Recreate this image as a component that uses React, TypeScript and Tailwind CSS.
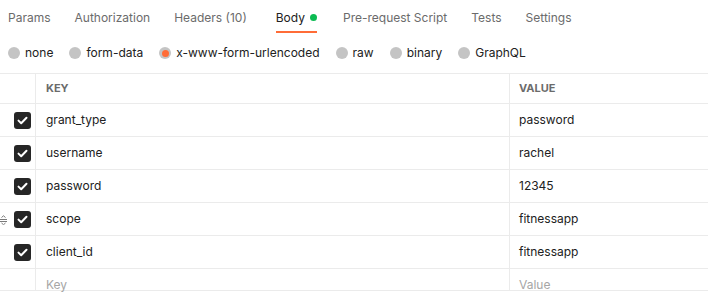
const tabs = [
  { label: "Params" },
  { label: "Authorization" },
  { label: "Headers", count: "(10)" },
  { label: "Body", active: true, extra: "ml-[5px]" },
  { label: "Pre-request Script", extra: "ml-[2px]" },
  { label: "Tests" },
  { label: "Settings" },
];

const bodyTypes = ["none", "form-data", "x-www-form-urlencoded", "raw", "binary", "GraphQL"];

const rows = [
  { key: "grant_type", value: "password" },
  { key: "username", value: "rachel" },
  { key: "password", value: "12345" },
  { key: "scope", value: "fitnessapp", hover: true },
  { key: "client_id", value: "fitnessapp" },
];

function Check() {
  return (
    <div className="w-[17px] h-[17px] rounded-[3px] bg-[#262626] flex items-center justify-center">
      <svg width="11" height="9" viewBox="0 0 11 9" fill="none">
        <path d="M1.5 4.6 4.2 7.2 9.5 1.8" stroke="white" strokeWidth="2" strokeLinecap="round" strokeLinejoin="round" />
      </svg>
    </div>
  );
}

function DragHandle() {
  return (
    <svg width="7" height="10" viewBox="0 0 7 10" fill="none" className="absolute left-0 top-[12px]">
      <path d="M1.5 2.5 3.5 0.8 5.5 2.5M0 4.5h7M0 6.5h7M1.5 8 3.5 9.7 5.5 8" stroke="#7a7a7a" strokeWidth="1" />
    </svg>
  );
}

export default function App() {
  return (
    <div className="w-[708px] h-[294px] overflow-hidden bg-white font-['Inter',sans-serif] text-[12px] text-[#212121]">
      <div className="flex items-center h-[35px] pl-[8px] gap-[24px]">
        {tabs.map((t) => (
          <div
            key={t.label}
            className={`relative h-full flex items-center gap-[5px] ${t.extra ?? ""} ${t.active ? "text-[#212121]" : "text-[#6b6b6b]"}`}
          >
            <span>
              {t.label}
              {t.count && <span className="text-[#6b6b6b]"> {t.count}</span>}
            </span>
            {t.active && <span className="w-[7px] h-[7px] rounded-full bg-[#0cbb52]" />}
            {t.active && <div className="absolute left-0 right-0 bottom-[2px] h-[2px] bg-[#ff6c37]" />}
          </div>
        ))}
      </div>

      <div className="flex items-center h-[36px] pl-[8px] gap-[16px]">
        {bodyTypes.map((b) => {
          const on = b === "x-www-form-urlencoded";
          return (
            <div key={b} className="flex items-center gap-[5px] text-[#212121]">
              <span className="w-[12px] h-[12px] rounded-full bg-[#c4c4c4] flex items-center justify-center">
                {on && <span className="w-[7px] h-[7px] rounded-full bg-[#ff6c37]" />}
              </span>
              <span>{b}</span>
            </div>
          );
        })}
      </div>

      <div className="mt-[2px] border-t border-[#ebebeb] grid grid-cols-[36px_474px_1fr]">
        <div className="h-[30px] border-b border-r border-[#ebebeb]" />
        <div className="h-[30px] border-b border-r border-[#ebebeb] pl-[10px] flex items-center text-[11px] font-bold text-[#6b6b6b]">
          KEY
        </div>
        <div className="h-[30px] border-b border-[#ebebeb] pl-[9px] flex items-center text-[11px] font-bold text-[#6b6b6b]">
          VALUE
        </div>
        {rows.map((r) => (
          <div key={r.key} className="contents">
            <div className="relative h-[33px] border-b border-r border-[#ebebeb] flex items-center pl-[14px]">
              {r.hover && <DragHandle />}
              <Check />
            </div>
            <div className="h-[33px] border-b border-r border-[#ebebeb] pl-[10px] flex items-center">{r.key}</div>
            <div className="h-[33px] border-b border-[#ebebeb] pl-[9px] flex items-center">{r.value}</div>
          </div>
        ))}
        <div className="h-[22px] border-b border-r border-[#ebebeb]" />
        <div className="h-[22px] border-b border-r border-[#ebebeb] pl-[10px] pt-[7px] text-[#a6a6a6]">Key</div>
        <div className="h-[22px] border-b border-[#ebebeb] pl-[9px] pt-[7px] text-[#a6a6a6]">Value</div>
      </div>
    </div>
  );
}
